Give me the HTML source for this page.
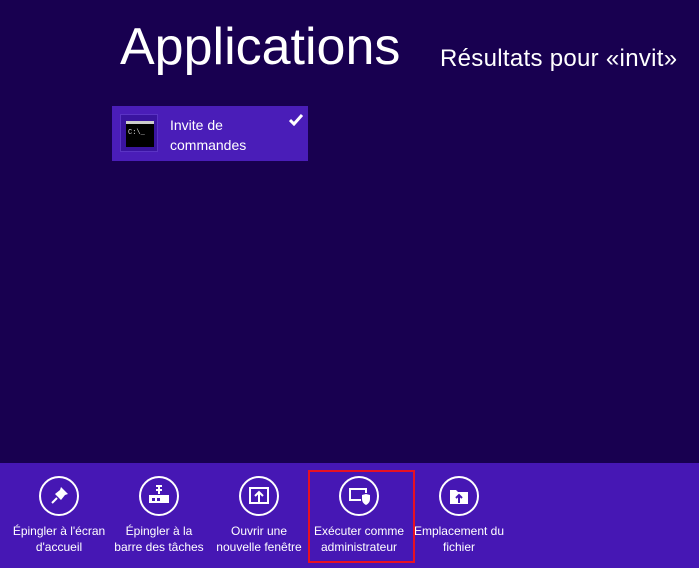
<!DOCTYPE html>
<html><head><style>
body{margin:0;width:699px;height:568px;background:#180050;position:relative;overflow:hidden;font-family:"Liberation Sans",sans-serif;color:#fff}
.t1{position:absolute;left:120px;top:17px;font-size:52px;font-weight:300}
.t2{position:absolute;left:440px;top:45px;font-size:24px;letter-spacing:0.3px}
.tile{position:absolute;left:112px;top:106px;width:196px;height:55px;background:#4a1db8}
.ic{position:absolute;left:8px;top:8px;width:38px;height:38px;background:#3a14a0;box-sizing:border-box;border:1px solid #5a33c4}
.cmd{position:absolute;left:5px;top:6px;width:28px;height:26px;background:#000;border-top:3px solid #ccc;box-sizing:border-box;font:7px "Liberation Mono",monospace;color:#ddd;padding:5px 0 0 2px}
.tt{position:absolute;left:58px;top:9px;font-size:14px;line-height:20px}
.chk{position:absolute;left:177px;top:8px}
.bar{position:absolute;left:0;top:463px;width:699px;height:105px;background:#4617b4}
.b{position:absolute;top:0;width:100px;text-align:center;font-size:12px;line-height:16px}
.c{position:absolute;left:30px;top:13px;width:36px;height:36px;border:2px solid #fff;border-radius:50%}
.b .l{position:absolute;top:60px;left:-5px;width:110px}
.red{position:absolute;left:308px;top:470px;width:103px;height:89px;border:2px solid #e81123}
</style></head><body>
<div class="t1">Applications</div>
<div class="t2">Résultats pour «invit»</div>
<div class="tile"><div class="ic"><div class="cmd">C:\_</div></div><div class="tt">Invite de<br>commandes</div><svg class="chk" width="14" height="12"><path d="M1 6 L5 10 L13 1" stroke="#fff" stroke-width="3" fill="none"/></svg></div>
<div class="bar">
<div class="b" style="left:9px"><div class="c"><svg width="36" height="36"><path d="M11 25 L16 20" stroke="#fff" stroke-width="2"/><path d="M20 9 L27 16 L24 17 L20 22 L14 16 L19 12Z" fill="#fff"/></svg></div><div class="l">Épingler à l'écran<br>d'accueil</div></div>
<div class="b" style="left:109px"><div class="c"><svg width="36" height="36"><rect x="8" y="17" width="20" height="8" fill="#fff"/><rect x="11" y="20" width="3" height="3" fill="#4617b4"/><rect x="16" y="20" width="3" height="3" fill="#4617b4"/><path d="M18 7 V16 M15 8 H21 M15 12 H21" stroke="#fff" stroke-width="2"/></svg></div><div class="l">Épingler à la<br>barre des tâches</div></div>
<div class="b" style="left:209px"><div class="c"><svg width="36" height="36"><rect x="9" y="10" width="18" height="15" fill="none" stroke="#fff" stroke-width="2"/><path d="M18 24 V15 M14 18 L18 14 L22 18" stroke="#fff" stroke-width="2" fill="none"/></svg></div><div class="l">Ouvrir une<br>nouvelle fenêtre</div></div>
<div class="b" style="left:309px"><div class="c"><svg width="36" height="36"><path d="M20 22 H9 V11 H25 V15" fill="none" stroke="#fff" stroke-width="2"/><path d="M21 17 L25 16 L29 17 V21 Q29 25 25 27 Q21 25 21 21Z" fill="#fff"/></svg></div><div class="l">Exécuter comme<br>administrateur</div></div>
<div class="b" style="left:409px"><div class="c"><svg width="36" height="36"><path d="M9 12 H15 L17 14 H27 V26 H9Z" fill="#fff"/><path d="M18 25 V18 M15 20 L18 17 L21 20" stroke="#4617b4" stroke-width="2" fill="none"/></svg></div><div class="l">Emplacement du<br>fichier</div></div>
</div>
<div class="red"></div>
</body></html>
